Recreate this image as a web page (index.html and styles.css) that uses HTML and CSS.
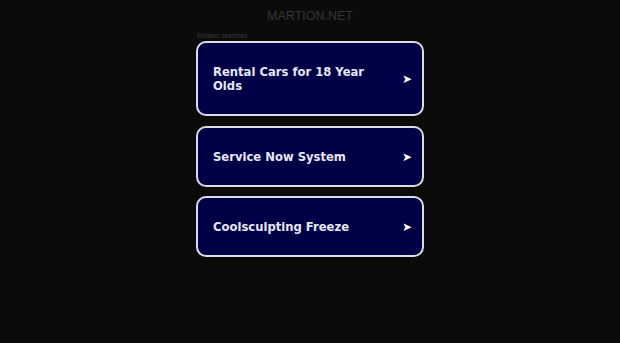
FILE: index.html
```html
<!DOCTYPE html>
<html lang="en">
<head>
    <meta charset="UTF-8">
    <meta name="viewport" content="width=device-width, initial-scale=1.0">
    <title>martion.net</title>
    <link rel="stylesheet" href="styles.css">
</head>
<body>

<div class="page">
    <!-- Domain header -->
    <div class="domain">MARTION.NET</div>

    <!-- Related searches -->
    <div class="related">
        <div class="related-title">Related searches</div>
        <a href="#" class="search-link">
            <span class="search-text">Rental Cars for 18 Year Olds</span>
            <span class="arrow">&#10148;</span>
        </a>
        <a href="#" class="search-link">
            <span class="search-text">Service Now System</span>
            <span class="arrow">&#10148;</span>
        </a>
        <a href="#" class="search-link">
            <span class="search-text">Coolsculpting Freeze</span>
            <span class="arrow">&#10148;</span>
        </a>
    </div>
</div>

</body>
</html>
```

FILE: styles.css
```css
* {
    margin: 0;
    padding: 0;
    box-sizing: border-box;
}

body {
    background: #0b0b0b;
    font-family: 'Liberation Sans', Arial, sans-serif;
    height: 100vh;
    overflow: hidden;
}

.page {
    display: flex;
    flex-direction: column;
    align-items: center;
}

.domain {
    color: #353535;
    font-size: 12.5px;
    line-height: 14px;
    margin-top: 9px;
}

.related {
    width: 228px;
    margin-top: 11px;
    display: flex;
    flex-direction: column;
    gap: 9.5px;
}

.related-title {
    color: #3a3a3a;
    font-size: 6.5px;
    line-height: 8px;
    margin-bottom: -8.5px;
    margin-top: -2px;
    padding-left: 1px;
}

.search-link {
    display: flex;
    align-items: center;
    justify-content: space-between;
    background: #000046;
    border: 2px solid #dcdce4;
    border-radius: 10px;
    padding: 22px 10px 21px 15px;
    color: #e6e6f5;
    text-decoration: none;
}

.search-text {
    font-family: 'DejaVu Sans', Verdana, sans-serif;
    font-weight: bold;
    font-size: 11.6px;
    line-height: 14px;
    max-width: 175px;
}

.arrow {
    font-family: 'DejaVu Sans', sans-serif;
    font-size: 12px;
    line-height: 14px;
    color: #ffffff;
}
```
